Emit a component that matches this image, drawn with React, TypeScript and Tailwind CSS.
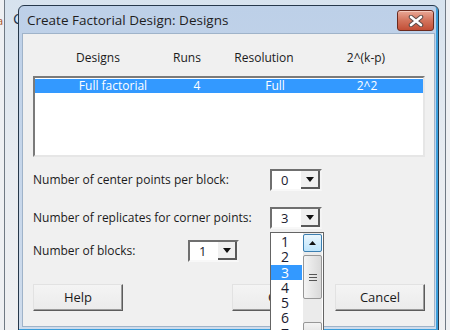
import React from "react";

function Combo({ value, width = "w-[52px]" }: { value: string; width?: string }) {
  return (
    <div
      className={`flex h-[22px] ${width} border-2 border-t-[#6f6f6f] border-l-[#6f6f6f] border-r-[#f4f4f4] border-b-[#f8f8f8] bg-white`}
    >
      <span className="flex-1 pl-[9px] text-[13px] leading-[18px] text-[#1a1a2e]">{value}</span>
      <div className="flex w-[19px] items-center justify-center border-r-2 border-b-2 border-r-[#5a5a5a] border-b-[#5a5a5a] bg-[#f0f0f0]">
        <svg width="8" height="5" viewBox="0 0 8 5">
          <path d="M0 0h8L4 5z" fill="#111" />
        </svg>
      </div>
    </div>
  );
}

function Btn({ label, className = "" }: { label: string; className?: string }) {
  return (
    <div
      className={`flex h-[27px] w-[90px] items-center justify-center border border-t-[#e2e2e2] border-l-[#e2e2e2] border-r-[#5c5c5c] border-b-[#5c5c5c] bg-gradient-to-b from-[#f4f4f4] to-[#ebebeb] text-[13px] shadow-[inset_-1px_-1px_0_#9c9c9c] ${className}`}
    >
      {label}
    </div>
  );
}

export default function App() {
  const items = ["1", "2", "3", "4", "5", "6", "7"];

  return (
    <div className="relative h-[330px] w-[450px] overflow-hidden bg-[#eef0f3] font-['Open_Sans',sans-serif] text-[12px] text-[#1b1b1b]">
      {/* window behind */}
      <div className="absolute left-[4px] right-[4px] top-[-8px] bottom-[-10px] rounded-[6px] border border-[#6f7984] bg-gradient-to-b from-[#d6e2ee] via-[#e8ecf1] to-[#eff0f2]">
        <span className="absolute left-[8px] top-[14px] text-[15px] text-[#23364d]">C</span>
      </div>
      <span className="absolute left-[-3px] top-[13px] text-[11px] text-[#a8521e]">a</span>

      {/* dialog */}
      <div className="absolute left-[18px] top-[5px] flex h-[327px] w-[421px] flex-col rounded-t-[6px] border border-[#26384b] bg-gradient-to-b from-[#bdd0e8] to-[#cfdcec] shadow-[inset_-2px_-2px_0_#3b9edb]">
        <div className="flex h-[27px] shrink-0 items-start justify-between">
          <span className="ml-[8px] mt-[4px] text-[13.5px] leading-[20px] text-[#1e1e1e]">
            Create Factorial Design: Designs
          </span>
          <div className="mr-[4px] mt-[4px] flex h-[21px] w-[37px] items-center justify-center rounded-[3px] border border-[#6b2a1e] bg-gradient-to-b from-[#e9a896] via-[#d3735c] to-[#c24e36] shadow-[inset_0_1px_0_#f5c9bc]">
            <svg width="16" height="12" viewBox="0 0 16 12">
              <path d="M3 2l10 8M13 2L3 10" stroke="#5a4a48" strokeWidth="4.5" strokeLinecap="round" />
              <path d="M3 2l10 8M13 2L3 10" stroke="#fff" strokeWidth="2.6" strokeLinecap="round" />
            </svg>
          </div>
        </div>

        <div className="mx-[3px] flex h-[294px] shrink-0 flex-col border border-[#9fb3c9] bg-[#f0f0f0] pl-[10px] pr-[9px]">
          {/* column headers */}
          <div className="mt-[17px] flex h-[14px] pl-[25px] leading-[14px]">
            <span className="w-[80px] text-center">Designs</span>
            <span className="ml-[19px] w-[60px] text-center">Runs</span>
            <span className="ml-[12px] w-[70px] text-center">Resolution</span>
            <span className="ml-[32px] w-[70px] text-center">2^(k-p)</span>
          </div>

          {/* designs list */}
          <div className="mt-[11px] h-[81px] border-2 border-t-[#7a7a7a] border-l-[#7a7a7a] border-r-[#e6e6e6] border-b-[#e6e6e6] bg-white">
            <div className="mt-[1px] flex h-[14px] bg-[#3399ff] pl-[38px] leading-[14px] text-white">
              <span className="w-[80px] text-center">Full factorial</span>
              <span className="ml-[14px] w-[60px] text-center">4</span>
              <span className="ml-[13px] w-[70px] text-center">Full</span>
              <span className="ml-[22px] w-[70px] text-center">2^2</span>
            </div>
          </div>

          <div className="mt-[12px] flex items-center">
            <span className="w-[237px]">Number of center points per block:</span>
            <Combo value="0" />
          </div>
          <div className="mt-[16px] flex items-center">
            <span className="w-[237px]">Number of replicates for corner points:</span>
            <Combo value="3" />
          </div>
          <div className="mt-[11px] flex items-center">
            <span className="w-[155px]">Number of blocks:</span>
            <Combo value="1" width="w-[51px]" />
          </div>

          <div className="mt-[22px] flex">
            <Btn label="Help" />
            <Btn label="OK" className="ml-auto" />
            <Btn label="Cancel" className="ml-[13px]" />
          </div>
        </div>
      </div>

      {/* open dropdown list */}
      <div className="absolute left-[270px] top-[232px] flex h-[110px] w-[54px] border border-[#646464] bg-white">
        <div className="w-[31px] pt-[1px]">
          {items.map((n) => (
            <div
              key={n}
              className={`h-[15.3px] pl-[10px] text-[14px] leading-[15px] ${
                n === "3" ? "bg-[#3399ff] text-white" : "text-[#1a1a2e]"
              }`}
            >
              {n}
            </div>
          ))}
        </div>
        <div className="ml-[1px] flex w-[19px] flex-col bg-[#ebebeb]">
          <div className="mt-[1px] flex h-[18px] items-center justify-center rounded-[2px] border border-[#3c7fb1] bg-gradient-to-b from-[#eaf6fd] to-[#bde4fb]">
            <svg width="7" height="4" viewBox="0 0 7 4">
              <path d="M0 4h7L3.5 0z" fill="#111" />
            </svg>
          </div>
          <div className="mt-[3px] flex h-[44px] flex-col items-center justify-center gap-[2px] rounded-[2px] border border-[#979797] bg-gradient-to-r from-[#f4f4f4] to-[#d9d9d9]">
            <div className="h-[1px] w-[8px] bg-[#555]" />
            <div className="h-[1px] w-[8px] bg-[#555]" />
            <div className="h-[1px] w-[8px] bg-[#555]" />
          </div>
          <div className="mt-[23px] h-[18px] rounded-[2px] border border-[#979797] bg-gradient-to-b from-[#f4f4f4] to-[#dcdcdc]" />
        </div>
      </div>
    </div>
  );
}
